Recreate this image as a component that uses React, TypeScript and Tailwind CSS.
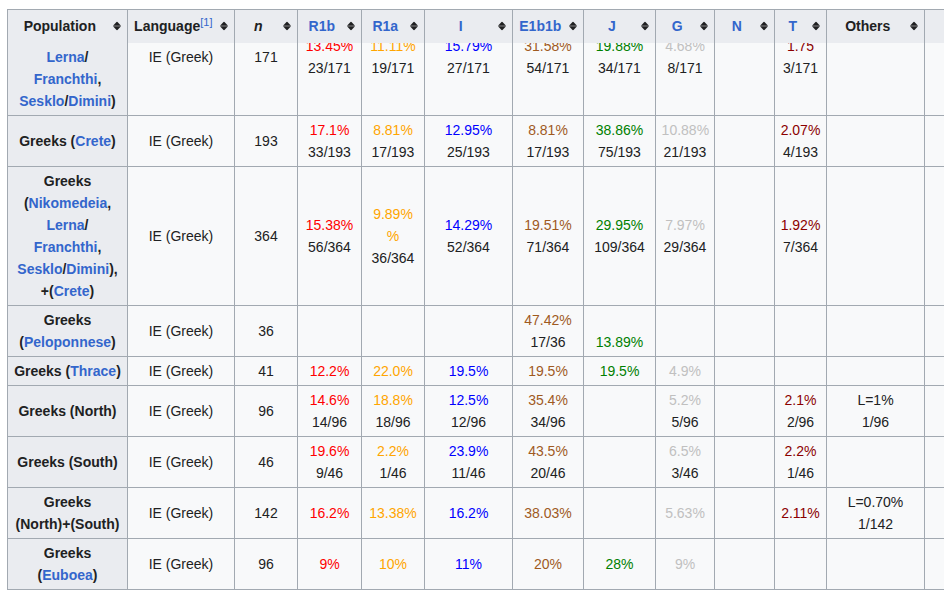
import type { ReactNode } from "react";

// column colours for the haplogroup percentages
const colColors = [
  "text-[#ff0000]", // R1b
  "text-[#ffa500]", // R1a
  "text-[#0000ff]", // I
  "text-[#9f5a1f]", // E1b1b
  "text-[#008000]", // J
  "text-[#c0c0c0]", // G
  "text-[#202122]", // N
  "text-[#8b0000]", // T
  "text-[#202122]", // Others
  "text-[#202122]", // extra
];

type Cell = null | [string, string?] | ReactNode;

interface Row {
  pop: ReactNode;
  n: string;
  cells: Cell[];
}

const A = ({ children }: { children: ReactNode }) => (
  <span className="text-[#3366cc]">{children}</span>
);

const rows: Row[] = [
  {
    pop: (
      <>
        Greeks
        <br />(<A>Nikomedeia</A>,
        <br />
        <A>Lerna</A>/
        <br />
        <A>Franchthi</A>,
        <br />
        <A>Sesklo</A>/<A>Dimini</A>)
      </>
    ),
    n: "171",
    cells: [
      ["13.45%", "23/171"],
      ["11.11%", "19/171"],
      ["15.79%", "27/171"],
      ["31.58%", "54/171"],
      ["19.88%", "34/171"],
      ["4.68%", "8/171"],
      null,
      ["1.75", "3/171"],
      null,
      null,
    ],
  },
  {
    pop: (
      <>
        Greeks (<A>Crete</A>)
      </>
    ),
    n: "193",
    cells: [
      ["17.1%", "33/193"],
      ["8.81%", "17/193"],
      ["12.95%", "25/193"],
      ["8.81%", "17/193"],
      ["38.86%", "75/193"],
      ["10.88%", "21/193"],
      null,
      ["2.07%", "4/193"],
      null,
      null,
    ],
  },
  {
    pop: (
      <>
        Greeks
        <br />(<A>Nikomedeia</A>,
        <br />
        <A>Lerna</A>/
        <br />
        <A>Franchthi</A>,
        <br />
        <A>Sesklo</A>/<A>Dimini</A>),
        <br />
        +(<A>Crete</A>)
      </>
    ),
    n: "364",
    cells: [
      ["15.38%", "56/364"],
      <>
        <span className="text-[#ffa500]">
          9.89%
          <br />%
        </span>
        <br />
        36/364
      </>,
      ["14.29%", "52/364"],
      ["19.51%", "71/364"],
      ["29.95%", "109/364"],
      ["7.97%", "29/364"],
      null,
      ["1.92%", "7/364"],
      null,
      null,
    ],
  },
  {
    pop: (
      <>
        Greeks
        <br />(<A>Peloponnese</A>)
      </>
    ),
    n: "36",
    cells: [
      null,
      null,
      null,
      ["47.42%", "17/36"],
      <>
        <br />
        <span className="text-[#008000]">13.89%</span>
      </>,
      null,
      null,
      null,
      null,
      null,
    ],
  },
  {
    pop: (
      <>
        Greeks (<A>Thrace</A>)
      </>
    ),
    n: "41",
    cells: [["12.2%"], ["22.0%"], ["19.5%"], ["19.5%"], ["19.5%"], ["4.9%"], null, null, null, null],
  },
  {
    pop: <>Greeks (North)</>,
    n: "96",
    cells: [
      ["14.6%", "14/96"],
      ["18.8%", "18/96"],
      ["12.5%", "12/96"],
      ["35.4%", "34/96"],
      null,
      ["5.2%", "5/96"],
      null,
      ["2.1%", "2/96"],
      ["L=1%", "1/96"],
      null,
    ],
  },
  {
    pop: <>Greeks (South)</>,
    n: "46",
    cells: [
      ["19.6%", "9/46"],
      ["2.2%", "1/46"],
      ["23.9%", "11/46"],
      ["43.5%", "20/46"],
      null,
      ["6.5%", "3/46"],
      null,
      ["2.2%", "1/46"],
      null,
      null,
    ],
  },
  {
    pop: (
      <>
        Greeks
        <br />
        (North)+(South)
      </>
    ),
    n: "142",
    cells: [
      ["16.2%"],
      ["13.38%"],
      ["16.2%"],
      ["38.03%"],
      null,
      ["5.63%"],
      null,
      ["2.11%"],
      ["L=0.70%", "1/142"],
      null,
    ],
  },
  {
    pop: (
      <>
        Greeks
        <br />(<A>Euboea</A>)
      </>
    ),
    n: "96",
    cells: [["9%"], ["10%"], ["11%"], ["20%"], ["28%"], ["9%"], null, null, null, null],
  },
  {
    pop: (
      <>
        Greeks
        <br />(<A>Attica</A>)
      </>
    ),
    n: "40",
    cells: [["10%"], ["5%"], ["12.5%"], ["25%"], ["20%"], ["5%"], null, null, null, null],
  },
];

function Cols() {
  return (
    <colgroup>
      <col className="w-[120px]" />
      <col className="w-[107px]" />
      <col className="w-[63px]" />
      <col className="w-[64px]" />
      <col className="w-[63px]" />
      <col className="w-[88px]" />
      <col className="w-[71px]" />
      <col className="w-[72px]" />
      <col className="w-[59px]" />
      <col className="w-[60px]" />
      <col className="w-[52px]" />
      <col className="w-[98px]" />
      <col className="w-[60px]" />
    </colgroup>
  );
}

function SortIcon() {
  return (
    <svg width="8" height="9" viewBox="0 0 8 9" className="shrink-0">
      <path d="M0 4.2 L4 0 L8 4.2 Z" fill="#202122" />
      <path d="M0 4.8 L4 9 L8 4.8 Z" fill="#202122" />
    </svg>
  );
}

function HeadCell({ children, link }: { children?: ReactNode; link?: boolean }) {
  return (
    <th className="relative border-x border-t border-[#a2a9b1] bg-[#eaecf0] py-0 pl-[5.6px] pr-[21px] text-center font-bold">
      <span className={link ? "text-[#3366cc]" : "text-[#202122]"}>{children}</span>
      <span className="absolute right-[6px] top-1/2 -translate-y-1/2">
        <SortIcon />
      </span>
    </th>
  );
}

function renderCell(cell: Cell, i: number) {
  if (cell === null) return null;
  if (Array.isArray(cell)) {
    const [p, f] = cell as [string, string?];
    return (
      <>
        <span className={colColors[i]}>{p}</span>
        {f && (
          <>
            <br />
            {f}
          </>
        )}
      </>
    );
  }
  return cell;
}

export default function App() {
  const headers = ["R1b", "R1a", "I", "E1b1b", "J", "G", "N", "T"];

  return (
    <div className="h-[590px] w-[944px] overflow-hidden bg-white pl-[7px] pt-[9px] font-['Liberation_Sans',Arial,sans-serif] text-[14px] leading-[22px] text-[#202122]">
      <table className="w-[977px] table-fixed border-collapse">
        <Cols />
        <thead>
          <tr className="h-[33px]">
            <HeadCell>Population</HeadCell>
            <HeadCell>
              Language
              <sup className="relative -top-[5px] align-baseline text-[11px] font-normal text-[#3366cc]">[1]</sup>
            </HeadCell>
            <HeadCell>
              <i>n</i>
            </HeadCell>
            {headers.map((h) => (
              <HeadCell key={h} link>
                {h}
              </HeadCell>
            ))}
            <HeadCell>Others</HeadCell>
            <th className="border-x border-t border-[#a2a9b1] bg-[#eaecf0]" />
          </tr>
        </thead>
      </table>

      {/* body scrolled under the sticky header */}
      <div className="h-[548px] overflow-hidden">
        <table className="-mt-[45px] w-[977px] table-fixed border-collapse">
          <Cols />
          <tbody>
            {rows.map((r, ri) => (
              <tr key={ri}>
                <th className="border border-[#a2a9b1] bg-[#eaecf0] px-[5.6px] py-[3px] text-center align-middle font-bold whitespace-nowrap">
                  {r.pop}
                </th>
                <td className="border border-[#a2a9b1] bg-[#f8f9fa] px-[5.6px] py-[3px] text-center align-middle">
                  IE (Greek)
                </td>
                <td className="border border-[#a2a9b1] bg-[#f8f9fa] px-[5.6px] py-[3px] text-center align-middle">
                  {r.n}
                </td>
                {r.cells.map((c, i) => (
                  <td
                    key={i}
                    className="border border-[#a2a9b1] bg-[#f8f9fa] px-[5.6px] py-[3px] text-center align-middle whitespace-nowrap"
                  >
                    {renderCell(c, i)}
                  </td>
                ))}
              </tr>
            ))}
          </tbody>
        </table>
      </div>
    </div>
  );
}
